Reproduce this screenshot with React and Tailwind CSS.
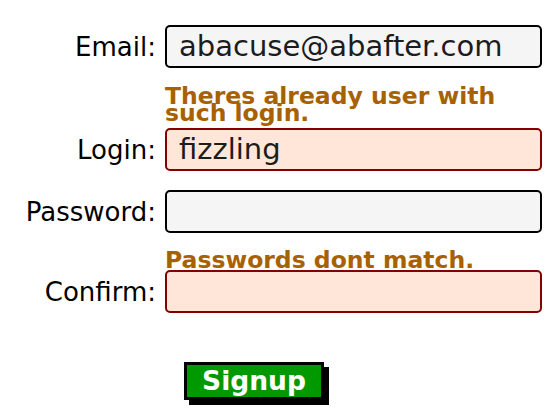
export default function App() {
  const font = { fontFamily: '"DejaVu Sans", Verdana, sans-serif' };
  const labelCls = "w-[157px] text-right text-[26px] text-black leading-none pr-[1px] whitespace-nowrap";
  const inputBase =
    "ml-[8px] w-[377px] h-[43px] rounded-[5px] border-2 pl-[12px] text-[29px] text-[#1c1c1c] flex items-center leading-none";
  const normal = "border-black bg-[#f5f5f5]";
  const err = "border-[#840000] bg-[#ffe6d9]";
  const errText = "ml-[165px] text-[23.5px] font-bold text-[#a86100] leading-[17px]";
  return (
    <div className="w-[555px] h-[417px] bg-white pt-[25px] flex flex-col" style={font}>
      <div className="flex items-center">
        <div className={labelCls}>Email:</div>
        <div className={`${inputBase} ${normal}`}>abacuse@abafter.com</div>
      </div>
      <div className={`${errText} mt-[20px]`}>
        Theres already user with
        <br />
        such login.
      </div>
      <div className="flex items-center mt-[6px]">
        <div className={labelCls}>Login:</div>
        <div className={`${inputBase} ${err}`}>fizzling</div>
      </div>
      <div className="flex items-center mt-[19px]">
        <div className={labelCls}>Password:</div>
        <div className={`${inputBase} ${normal}`}></div>
      </div>
      <div className={`${errText} mt-[19px]`}>Passwords dont match.</div>
      <div className="flex items-center mt-[1px]">
        <div className={labelCls}>Confirm:</div>
        <div className={`${inputBase} ${err}`}></div>
      </div>
      <div className="ml-[184px] mt-[49px]">
        <button className="w-[140px] h-[38px] border-[3px] border-black bg-[#009900] text-white font-bold text-[26.5px] leading-none flex items-center justify-center shadow-[5px_5px_0_#000]">
          Signup
        </button>
      </div>
    </div>
  );
}
